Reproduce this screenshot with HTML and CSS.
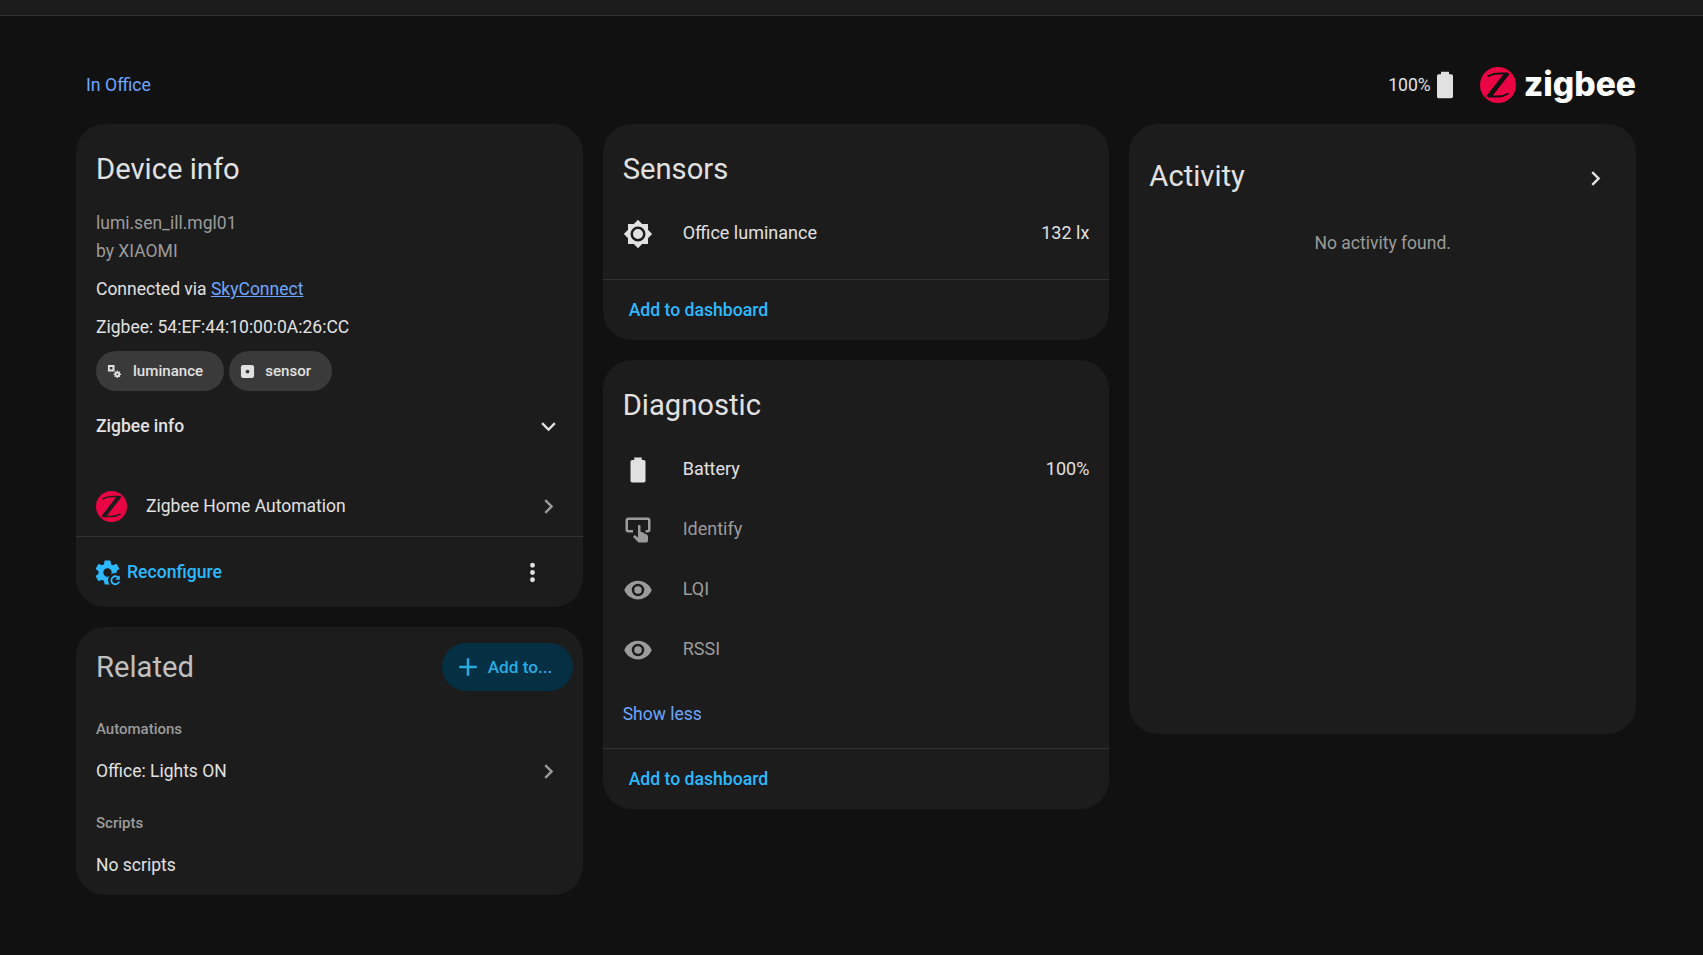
FILE: index.html

```html
<!DOCTYPE html>
<html lang="en">
<head>
  <meta charset="UTF-8">
  <title>lumi.sen_ill.mgl01</title>
  <link rel="stylesheet" href="styles.css">
</head>
<body>
  <div class="topbar"></div>

  <div class="page">
    <div class="header">
      <a class="area" href="#">In Office</a>
      <div class="header-right">
        <span class="batt-text">100%</span>
        <svg class="batt-icon" viewBox="0 0 24 24"><path d="M16.67,4H15V2H9V4H7.33A1.33,1.33 0 0,0 6,5.33V20.67C6,21.4 6.6,22 7.33,22H16.67A1.33,1.33 0 0,0 18,20.67V5.33C18,4.6 17.4,4 16.67,4Z"/></svg>
        <svg class="zb-mark" viewBox="0 0 36 36">
          <circle cx="18" cy="18" r="18" fill="#eb0443"/>
          <path d="M24 6.500H30L12 29.500H6Z" fill="#111111"/>
          <path d="M7.500 9.500C11 7.500 14 6.500 18 6.500H28M8 29.500H18C22 29.500 25 28.500 28.500 26.500" fill="none" stroke="#111111" stroke-width="1.800"/>
        </svg>
        <span class="zb-word">zigbee</span>
      </div>
    </div>

    <div class="columns">
      <div class="column">
        <div class="card device-card">
          <h1>Device info</h1>
          <div class="model">lumi.sen_ill.mgl01<br>by XIAOMI</div>
          <div class="line">Connected via <a href="#">SkyConnect</a></div>
          <div class="line">Zigbee: 54:EF:44:10:00:0A:26:CC</div>
          <div class="chips">
            <div class="chip">
              <svg viewBox="0 0 16 16">
                <path fill-rule="evenodd" d="M1 1h7v7H1ZM3 3.200v2.600h2.800V3.200Z"/>
                <circle cx="11" cy="11" r="3"/>
                <path d="M11 7v8M7 11h8M8.200 8.200l5.600 5.600M13.800 8.200l-5.600 5.600" stroke="#e1e1e1" stroke-width="1.200"/>
                <circle cx="11" cy="11" r="1" fill="#3a3a3a"/>
              </svg>
              luminance
            </div>
            <div class="chip tight">
              <svg viewBox="0 0 16 16">
                <rect x="1" y="1" width="14" height="14" rx="2.500"/>
                <circle cx="8" cy="8" r="2" fill="#3a3a3a"/>
              </svg>
              sensor
            </div>
          </div>
          <div class="expander">
            <span>Zigbee info</span>
            <svg class="icon" viewBox="0 0 24 24"><path d="M7.410,8.580L12,13.170L16.590,8.580L18,10L12,16L6,10L7.410,8.580Z"/></svg>
          </div>
          <div class="integration">
            <svg class="zha-mark" viewBox="0 0 36 36">
              <circle cx="18" cy="18" r="18" fill="#eb0443"/>
              <path d="M24 6.500H30L12 29.500H6Z" fill="#1c1c1c"/>
              <path d="M7.500 9.500C11 7.500 14 6.500 18 6.500H28M8 29.500H18C22 29.500 25 28.500 28.500 26.500" fill="none" stroke="#1c1c1c" stroke-width="1.800"/>
            </svg>
            <span class="grow">Zigbee Home Automation</span>
            <svg class="icon dim" viewBox="0 0 24 24"><path d="M8.590,16.580L13.170,12L8.590,7.410L10,6L16,12L10,18L8.590,16.580Z"/></svg>
          </div>
          <div class="actions">
            <svg class="cog" viewBox="0 0 24 24">
              <path d="M12,15.500A3.500,3.500 0 0,1 8.500,12A3.500,3.500 0 0,1 12,8.500A3.500,3.500 0 0,1 15.500,12A3.500,3.500 0 0,1 12,15.500M19.430,12.970C19.470,12.650 19.500,12.330 19.500,12C19.500,11.670 19.470,11.340 19.430,11L21.540,9.370C21.730,9.220 21.780,8.950 21.660,8.730L19.660,5.270C19.540,5.050 19.270,4.960 19.050,5.050L16.560,6.050C16.040,5.660 15.500,5.320 14.870,5.070L14.500,2.420C14.460,2.180 14.250,2 14,2H10C9.750,2 9.540,2.180 9.500,2.420L9.130,5.070C8.500,5.320 7.960,5.660 7.440,6.050L4.950,5.050C4.730,4.960 4.460,5.050 4.340,5.270L2.340,8.730C2.210,8.950 2.270,9.220 2.460,9.370L4.570,11C4.530,11.340 4.500,11.670 4.500,12C4.500,12.330 4.530,12.650 4.570,12.970L2.460,14.630C2.270,14.780 2.210,15.050 2.340,15.270L4.340,18.730C4.460,18.950 4.730,19.030 4.950,18.950L7.440,17.940C7.960,18.340 8.500,18.680 9.130,18.930L9.500,21.580C9.540,21.820 9.750,22 10,22H14C14.250,22 14.460,21.820 14.500,21.580L14.870,18.930C15.500,18.670 16.040,18.340 16.560,17.940L19.050,18.950C19.270,19.030 19.540,18.950 19.660,18.730L21.660,15.270C21.780,15.050 21.730,14.780 21.540,14.630L19.430,12.970Z"/>
              <circle cx="18.500" cy="18.500" r="6" fill="#1c1c1c"/>
              <path d="M21.600 19.500A3.300 3.300 0 1 1 21 16.300" fill="none" stroke="#2cb9ff" stroke-width="1.500"/>
              <path d="M22.200 14.200V18H18.400Z"/>
            </svg>
            <span class="grow action-text">Reconfigure</span>
            <svg class="icon dots" viewBox="0 0 24 24"><path d="M12,16A2,2 0 0,1 14,18A2,2 0 0,1 12,20A2,2 0 0,1 10,18A2,2 0 0,1 12,16M12,10A2,2 0 0,1 14,12A2,2 0 0,1 12,14A2,2 0 0,1 10,12A2,2 0 0,1 12,10M12,4A2,2 0 0,1 14,6A2,2 0 0,1 12,8A2,2 0 0,1 10,6A2,2 0 0,1 12,4Z"/></svg>
          </div>
        </div>

        <div class="card related-card">
          <div class="related-head">
            <h1 class="soft">Related</h1>
            <button class="add-btn">
              <svg viewBox="0 0 24 24"><path d="M19,13H13V19H11V13H5V11H11V5H13V11H19V13Z"/></svg>
              Add to...
            </button>
          </div>
          <div class="rel-label first">Automations</div>
          <div class="rel-row">
            <span class="grow">Office: Lights ON</span>
            <svg class="icon dim" viewBox="0 0 24 24"><path d="M8.590,16.580L13.170,12L8.590,7.410L10,6L16,12L10,18L8.590,16.580Z"/></svg>
          </div>
          <div class="rel-label">Scripts</div>
          <div class="rel-row">No scripts</div>
        </div>
      </div>

      <div class="column">
        <div class="card">
          <h1>Sensors</h1>
          <div class="entities">
            <div class="entity">
              <svg class="ent-icon" viewBox="0 0 24 24"><path d="M12,8A4,4 0 0,0 8,12A4,4 0 0,0 12,16A4,4 0 0,0 16,12A4,4 0 0,0 12,8M12,18A6,6 0 0,1 6,12A6,6 0 0,1 12,6A6,6 0 0,1 18,12A6,6 0 0,1 12,18M20,8.690V4H15.310L12,0.690L8.690,4H4V8.690L0.690,12L4,15.310V20H8.690L12,23.310L15.310,20H20V15.310L23.310,12L20,8.690Z"/></svg>
              <span class="grow">Office luminance</span>
              <span>132 lx</span>
            </div>
          </div>
          <div class="card-foot">Add to dashboard</div>
        </div>

        <div class="card">
          <h1>Diagnostic</h1>
          <div class="entities">
            <div class="entity">
              <svg class="ent-icon" viewBox="0 0 24 24"><path d="M16.670,4H15V2H9V4H7.330A1.330,1.330 0 0,0 6,5.330V20.670C6,21.400 6.600,22 7.330,22H16.670A1.330,1.330 0 0,0 18,20.670V5.330C18,4.600 17.400,4 16.670,4Z"/></svg>
              <span class="grow">Battery</span>
              <span>100%</span>
            </div>
            <div class="entity off">
              <svg class="ent-icon" viewBox="0 0 24 24"><path d="M20 20.500C19.970 21.320 19.320 21.970 18.500 22H13C12.620 22 12.260 21.850 12 21.570L8 17.370L8.740 16.600C8.930 16.390 9.200 16.280 9.500 16.280H9.700L12 18V9C12 8.450 12.450 8 13 8S14 8.450 14 9V13.470L15.210 13.600L19.150 15.790C19.680 16.030 20 16.560 20 17.140V20.500M20 2H4C2.900 2 2 2.900 2 4V12C2 13.110 2.900 14 4 14H8V12L4 12L4 4H20L20 12H18V14H20V13.960L20.040 14C21.130 14 22 13.090 22 12V4C22 2.900 21.110 2 20 2Z"/></svg>
              <span class="grow">Identify</span>
            </div>
            <div class="entity off">
              <svg class="ent-icon" viewBox="0 0 24 24"><path d="M12,9A3,3 0 0,0 9,12A3,3 0 0,0 12,15A3,3 0 0,0 15,12A3,3 0 0,0 12,9M12,17A5,5 0 0,1 7,12A5,5 0 0,1 12,7A5,5 0 0,1 17,12A5,5 0 0,1 12,17M12,4.500C7,4.500 2.730,7.610 1,12C2.730,16.390 7,19.500 12,19.500C17,19.500 21.270,16.390 23,12C21.270,7.610 17,4.500 12,4.500Z"/></svg>
              <span class="grow">LQI</span>
            </div>
            <div class="entity off">
              <svg class="ent-icon" viewBox="0 0 24 24"><path d="M12,9A3,3 0 0,0 9,12A3,3 0 0,0 12,15A3,3 0 0,0 15,12A3,3 0 0,0 12,9M12,17A5,5 0 0,1 7,12A5,5 0 0,1 12,7A5,5 0 0,1 17,12A5,5 0 0,1 12,17M12,4.500C7,4.500 2.730,7.610 1,12C2.730,16.390 7,19.500 12,19.500C17,19.500 21.270,16.390 23,12C21.270,7.610 17,4.500 12,4.500Z"/></svg>
              <span class="grow">RSSI</span>
            </div>
          </div>
          <div class="show-less">Show less</div>
          <div class="card-foot">Add to dashboard</div>
        </div>
      </div>

      <div class="column">
        <div class="card activity-card">
          <div class="activity-head">
            <h1>Activity</h1>
            <svg class="icon" viewBox="0 0 24 24"><path d="M8.590,16.580L13.170,12L8.590,7.410L10,6L16,12L10,18L8.590,16.580Z"/></svg>
          </div>
          <div class="no-activity">No activity found.</div>
        </div>
      </div>
    </div>
  </div>
</body>
</html>
```

FILE: styles.css

```css
* {
  box-sizing: border-box;
}
body {
  margin: 0;
  background: #111111;
  color: #e1e1e1;
  font-family: Roboto, sans-serif;
  font-size: 17.500px;
  height: 955px;
  overflow: hidden;
}
a {
  color: #6ea6ff;
}
svg {
  fill: currentColor;
  display: block;
  flex: none;
}
.topbar {
  height: 16px;
  background: #1c1c1c;
  border-bottom: 1px solid #333333;
}
.page {
  width: 1560px;
  margin-left: 76px;
}
.header {
  height: 108px;
  display: flex;
  align-items: center;
  justify-content: space-between;
  padding: 30px 0 0 10px;
}
.area {
  text-decoration: none;
  font-size: 17.700px;
}
.header-right {
  display: flex;
  align-items: center;
}
.batt-text {
  font-size: 17.600px;
}
.batt-icon {
  width: 32px;
  height: 32px;
  margin: 0 19px 0 -2px;
}
.zb-mark {
  width: 36px;
  height: 36px;
  margin-right: 8px;
}
.zb-word {
  font-family: Inter, sans-serif;
  font-weight: 800;
  font-size: 33.600px;
  line-height: 40px;
  color: #ffffff;
  padding-bottom: 3px;
}
.columns {
  display: flex;
  gap: 20px;
  align-items: flex-start;
}
.column {
  width: 507px;
  display: flex;
  flex-direction: column;
  gap: 20px;
}
.card {
  background: #1c1c1c;
  border-radius: 29px;
  overflow: hidden;
}
h1 {
  margin: 0;
  font-weight: 400;
  font-size: 29.200px;
  line-height: 38px;
  padding: 26px 0 0 20px;
}
.soft {
  color: #c0c0c0;
  padding: 0;
}
.grow {
  flex: 1;
}
.icon {
  width: 29px;
  height: 29px;
}
.dim {
  color: #9b9b9b;
}

/* device info */
.device-card {
  height: 483px;
}
.model {
  color: #9b9b9b;
  line-height: 28px;
  padding: 21px 20px 1px;
}
.line {
  padding: 9px 20px 0;
  line-height: 29px;
}
.chips {
  display: flex;
  gap: 5px;
  padding: 9px 20px 0;
}
.chip {
  display: flex;
  align-items: center;
  height: 40px;
  border-radius: 20px;
  background: #3a3a3a;
  padding: 0 21px 0 11px;
  font-size: 15.100px;
  font-weight: 500;
  gap: 11px;
}
.chip.tight {
  gap: 10px;
}
.chip svg {
  width: 15px;
  height: 15px;
}
.expander {
  display: flex;
  align-items: center;
  justify-content: space-between;
  height: 70px;
  padding: 0 20px;
  font-weight: 500;
}
.integration {
  display: flex;
  align-items: center;
  height: 61px;
  margin-top: 15px;
  padding: 0 20px;
  border-bottom: 1px solid #333333;
}
.zha-mark {
  width: 31px;
  height: 31px;
  margin-right: 19px;
}
.actions {
  display: flex;
  align-items: center;
  height: 69px;
  padding: 1px 20px 0 17px;
  color: #2cb9ff;
}
.cog {
  width: 29px;
  height: 29px;
  margin-right: 5px;
}
.action-text {
  font-size: 17.600px;
  font-weight: 500;
}
.dots {
  color: #e1e1e1;
  margin-right: 16px;
}

/* related */
.related-card {
  height: 268px;
}
.related-head {
  display: flex;
  align-items: center;
  justify-content: space-between;
  padding: 16px 10px 0 20px;
}
.add-btn {
  display: flex;
  align-items: center;
  width: 131px;
  height: 48px;
  border: none;
  border-radius: 24px;
  background: #052f43;
  color: #29abe2;
  font-family: Roboto, sans-serif;
  font-size: 17.200px;
  font-weight: 500;
  padding: 0 0 0 11px;
  gap: 5px;
}
.add-btn svg {
  width: 30px;
  height: 30px;
}
.rel-label {
  color: #9b9b9b;
  font-size: 15px;
  font-weight: 500;
  padding: 0 20px;
  line-height: 20px;
  margin-top: 18px;
}
.rel-label.first {
  margin-top: 28px;
}
.rel-row {
  display: flex;
  align-items: center;
  height: 48px;
  padding: 0 20px;
  margin-top: 8px;
}

/* entity cards */
.entities {
  padding: 14px 20px 0;
}
.entity {
  display: flex;
  align-items: center;
  height: 60px;
  font-size: 18px;
}
.off {
  color: #9b9b9b;
}
.ent-icon {
  width: 30px;
  height: 30px;
  margin: 4px 30px 0 0;
}
.card-foot {
  border-top: 1px solid #333333;
  height: 61px;
  margin-top: 17px;
  padding: 0 0 0 26px;
  display: flex;
  align-items: center;
  color: #2cb9ff;
  font-size: 17.600px;
  font-weight: 500;
}
.show-less {
  color: #6ea6ff;
  line-height: 24px;
  padding: 24px 20px 5px;
}

/* activity */
.activity-card {
  height: 610px;
}
.activity-head {
  display: flex;
  align-items: center;
  justify-content: space-between;
  padding: 33px 26px 0 0;
}
.activity-head h1 {
  padding-top: 0;
}
.activity-head svg {
  margin-top: 4px;
}
.no-activity {
  color: #9b9b9b;
  text-align: center;
  margin-top: 38px;
}
```
